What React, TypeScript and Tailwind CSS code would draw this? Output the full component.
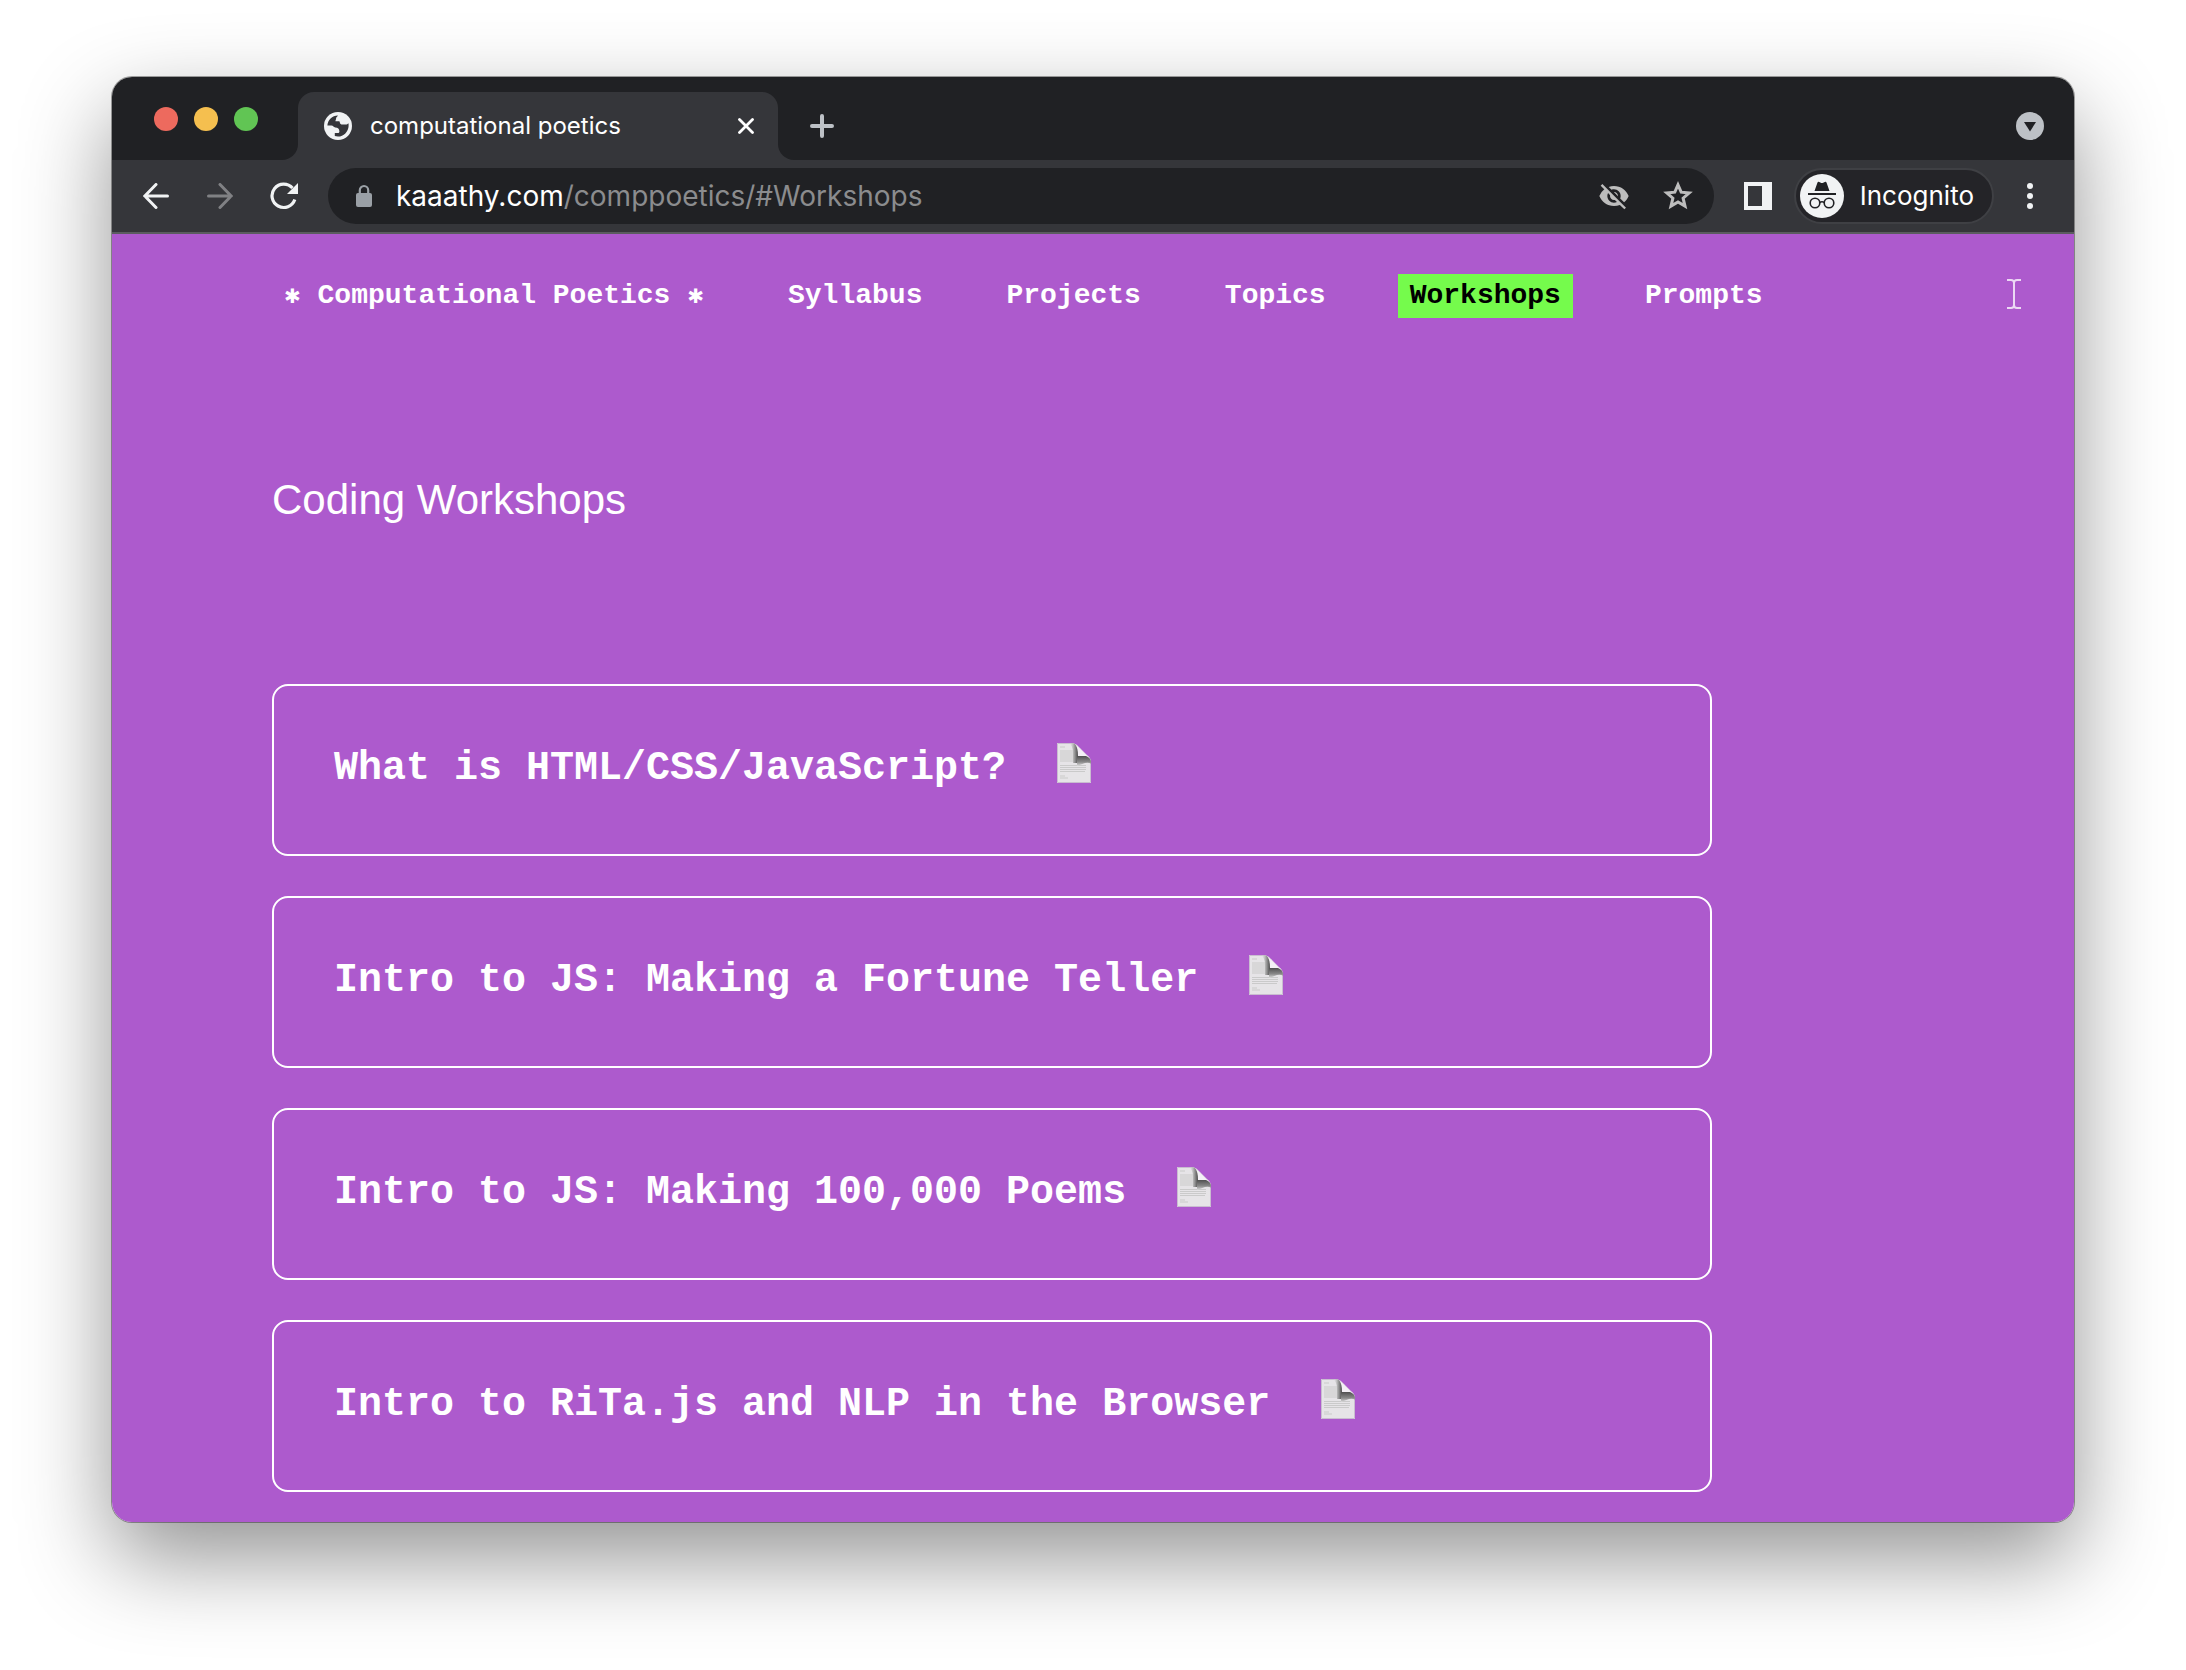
import type { ReactNode } from "react";
import { MdVisibilityOff } from "react-icons/md";

const navItems = ["Syllabus", "Projects", "Topics", "Workshops", "Prompts"];

const workshops = [
  "What is HTML/CSS/JavaScript?",
  "Intro to JS: Making a Fortune Teller",
  "Intro to JS: Making 100,000 Poems",
  "Intro to RiTa.js and NLP in the Browser",
];

function IconButton({ label, className, children }: { label: string; className: string; children: ReactNode }) {
  return (
    <button type="button" aria-label={label} className={`flex shrink-0 items-center justify-center ${className}`}>
      {children}
    </button>
  );
}

function GlobeIcon() {
  return (
    <svg viewBox="0 0 28 28" className="size-7 shrink-0" aria-hidden="true">
      <circle cx="14" cy="14" r="14" fill="#f1f3f4" />
      <path
        d="M3.4 13.6C3.6 8 8.2 3.5 14 3.4c-.6 1.400-1.900 1.400-1.900 2.900 0 1.600-.6 1.400-.6 2.900h3.300c.6 0 1 .5 1 1.100 0 1.500 1.200 2.300 2.800 2.300h3.300c.8 0 1.800-.5 2.500-1.400.2.900.3 1.800.2 2.800-.2 5.700-4.900 10.600-10.600 10.600-1.200 0-2.200-.2-3.200-.5v-3h3.200c1 0 1.400-.6 1.400-1.500 0-2.800-1.400-4.200-4.200-4.200-1.500 0-1.900-1.800-3.800-1.800z"
        fill="#35363a"
      />
    </svg>
  );
}

function IncognitoIcon() {
  return (
    <svg viewBox="0 0 44 44" className="size-11 shrink-0" aria-hidden="true">
      <circle cx="22" cy="22" r="22" fill="#f1f3f4" />
      <path d="M14.500 17 17.500 8.600c.3-.7 1-.9 1.700-.6l1.600.7c.8.300 1.600.3 2.400 0l1.600-.7c.7-.3 1.400-.1 1.700.6L29.500 17z" fill="#202124" />
      <path d="M8 20h28" stroke="#202124" strokeWidth="2" />
      <circle cx="15" cy="29" r="4.800" fill="none" stroke="#202124" strokeWidth="1.600" />
      <circle cx="29" cy="29" r="4.800" fill="none" stroke="#202124" strokeWidth="1.600" />
      <path d="M19.500 28.600q2.500-1.600 5 0" fill="none" stroke="#202124" strokeWidth="1.600" />
    </svg>
  );
}

function PageIcon() {
  return (
    <svg viewBox="0 0 34 40" className="h-10 w-[34px] shrink-0" role="img" aria-label="Document">
      <defs>
        <linearGradient id="curl" x1="0" y1="0" x2="0" y2="1">
          <stop offset="0" stopColor="#505050" />
          <stop offset="0.600" stopColor="#8a8a8a" />
          <stop offset="1" stopColor="#dedede" />
        </linearGradient>
        <linearGradient id="fold" x1="0" y1="0" x2="1" y2="0">
          <stop offset="0" stopColor="#dedede" stopOpacity="0" />
          <stop offset="0.500" stopColor="#b0b0b0" />
          <stop offset="1" stopColor="#4c4c4c" />
        </linearGradient>
      </defs>
      <path d="M0 0h16q4 1 7 5l7 7q4 3 4 7v21H0z" fill="#e6e4e7" />
      <path d="M.5 .5h15.500M.5 .5v39h33V19" fill="none" stroke="#c9bdd0" />
      <path
        d="M3 4h5M3 8h16M3 10h16M3 12h16M3 14h16M3 16h16M3 18h16M3 22.500h26M3 24.500h26M3 26.500h26M3 28.500h25M3 33h5M3 35h8"
        stroke="#cacaca"
        strokeWidth="1.200"
      />
      <path d="M12 0h4q5 2 5 9v11h-5V10q0-7-4-10z" fill="url(#fold)" />
      <path d="M20 13h9q5 2 5 6v2q-2-2-6-1l-8 3z" fill="url(#curl)" />
      <path d="M18 1q3 3 3 12h9z" fill="#f4f0f6" />
    </svg>
  );
}

function TabStrip() {
  return (
    <div className="flex h-[83px] bg-[#202124] pt-[15px] pr-[30px]">
      <div className="flex w-[170px] shrink-0 gap-4 pt-[15px] pl-[42px]">
        <button type="button" aria-label="Close window" className="size-6 rounded-full bg-[#ed6a5e]" />
        <button type="button" aria-label="Minimize window" className="size-6 rounded-full bg-[#f5bf4f]" />
        <button type="button" aria-label="Zoom window" className="size-6 rounded-full bg-[#61c554]" />
      </div>
      <div className="mt-13 w-4 shrink-0 bg-[#35363a]">
        <span className="block size-4 rounded-br-2xl bg-[#202124]" />
      </div>
      <div className="flex w-[480px] items-center rounded-t-2xl bg-[#35363a] pr-6 pl-[26px]">
        <GlobeIcon />
        <span className="ml-[18px] grow text-2xl text-white">computational poetics</span>
        <IconButton label="Close tab" className="size-4">
          <svg viewBox="0 0 16 16" className="size-4" aria-hidden="true">
            <path d="m1.500 1.500 13 13m0-13-13 13" stroke="#fff" strokeWidth="2.800" strokeLinecap="round" />
          </svg>
        </IconButton>
      </div>
      <div className="mt-13 w-4 shrink-0 bg-[#35363a]">
        <span className="block size-4 rounded-bl-2xl bg-[#202124]" />
      </div>
      <IconButton label="New tab" className="ml-4 w-6">
        <svg viewBox="0 0 24 24" className="size-6" aria-hidden="true">
          <path d="M12 2v20M2 12h20" stroke="#bdc1c6" strokeWidth="4" strokeLinecap="round" />
        </svg>
      </IconButton>
      <IconButton label="Search tabs" className="ml-auto w-7">
        <svg viewBox="0 0 28 28" className="size-7" aria-hidden="true">
          <circle cx="14" cy="14" r="14" fill="#bdc1c6" />
          <path d="M8 10h12l-6 9.500z" fill="#202124" />
        </svg>
      </IconButton>
    </div>
  );
}

function Toolbar() {
  return (
    <div className="flex h-[74px] items-center border-b-2 border-[#5b5c60] bg-[#35363a] pr-[30px] pl-6">
      <IconButton label="Back" className="size-10 text-[#f1f3f4]">
        <svg viewBox="0 0 26 26" className="size-[26px]" fill="none" stroke="currentColor" strokeWidth="3" strokeLinecap="round" aria-hidden="true">
          <path d="M24.500 13H2M13 1.500 1.800 13 13 24.500" />
        </svg>
      </IconButton>
      <IconButton label="Forward" className="ml-6 size-10 text-[#808184]">
        <svg viewBox="0 0 26 26" className="size-[26px]" fill="none" stroke="currentColor" strokeWidth="3" strokeLinecap="round" aria-hidden="true">
          <path d="M1.500 13H24M13 1.500 24.200 13 13 24.500" />
        </svg>
      </IconButton>
      <IconButton label="Reload" className="ml-6 size-10 text-[#f1f3f4]">
        <svg viewBox="0 0 28 28" className="size-7" aria-hidden="true">
          <path d="M24.800 17.500A11.700 11.700 0 1 1 22.500 6" fill="none" stroke="currentColor" strokeWidth="3.200" />
          <path d="M28 1v11H17z" fill="currentColor" />
        </svg>
      </IconButton>
      <div className="ml-6 flex h-14 grow items-center rounded-full bg-[#202124] pr-5 pl-6">
        <svg viewBox="0 0 24 24" className="size-6 shrink-0" aria-hidden="true">
          <rect x="4" y="9" width="16" height="14" rx="2" fill="#9aa0a6" />
          <path d="M7.800 10V6.200a4.200 4.200 0 0 1 8.400 0V10" fill="none" stroke="#9aa0a6" strokeWidth="2.200" />
        </svg>
        <a href="#Workshops" className="ml-5 grow text-[28px] leading-8 text-[#8b8c8e]">
          <span className="text-white">kaaathy.com</span>/comppoetics/#Workshops
        </a>
        <IconButton label="Third-party cookies blocked" className="size-8 text-[#bdbdbd]">
          <MdVisibilityOff className="size-8" />
        </IconButton>
        <IconButton label="Bookmark this tab" className="ml-8 size-8 text-[#bdbdbd]">
          <svg viewBox="0 0 32 32" className="size-8" fill="none" stroke="currentColor" strokeWidth="3" aria-hidden="true">
            <path d="m16 4.800 3.200 7.400 8 .7-6.100 5.300 1.900 7.900-7-4.200-7 4.200 1.900-7.900-6.100-5.300 8-.7z" />
          </svg>
        </IconButton>
      </div>
      <IconButton label="Side panel" className="ml-[30px] size-7">
        <svg viewBox="0 0 28 28" className="size-7" aria-hidden="true">
          <path d="M0 0h28v28H0zM4 4v20h14V4z" fill="#f1f3f4" fillRule="evenodd" />
        </svg>
      </IconButton>
      <button
        type="button"
        className="ml-[22px] flex h-14 items-center gap-4 rounded-full border-2 border-[#3f4044] bg-[#242428] pr-[18px] pl-1 text-[26px] leading-8 text-white"
      >
        <IncognitoIcon />
        Incognito
      </button>
      <IconButton label="Menu" className="ml-[22px] w-7">
        <svg viewBox="0 0 28 28" className="size-7" aria-hidden="true">
          <circle cx="14" cy="4" r="3" fill="#f1f3f4" />
          <circle cx="14" cy="14" r="3" fill="#f1f3f4" />
          <circle cx="14" cy="24" r="3" fill="#f1f3f4" />
        </svg>
      </IconButton>
    </div>
  );
}

export default function App() {
  return (
    <div className="min-h-screen bg-white px-28 pt-[77px] pb-37">
      <div className="overflow-hidden rounded-[20px] font-['Inter',sans-serif] shadow-[0_0_0_1px_rgba(0,0,0,0.35),0_36px_90px_rgba(0,0,0,0.43)]">
        <TabStrip />
        <Toolbar />
        <div className="bg-[#ad5acd] pt-10 pb-[30px] pl-40 text-white">
          <div className="flex items-start justify-between pr-13">
            <nav className="flex gap-15 font-['Liberation_Mono',monospace] text-[28px] leading-8 font-bold whitespace-nowrap">
              <a href="#" className="px-3 py-1.5">
                <span className="font-['DejaVu_Sans',sans-serif] text-xl leading-8">✱</span> Computational Poetics{" "}
                <span className="font-['DejaVu_Sans',sans-serif] text-xl leading-8">✱</span>
              </a>
              {navItems.map((item) => (
                <a
                  key={item}
                  href={`#${item}`}
                  className={item === "Workshops" ? "bg-[#75fb4c] px-3 py-1.5 text-black" : "px-3 py-1.5"}
                >
                  {item}
                </a>
              ))}
            </nav>
            <svg viewBox="0 0 16 30" className="mt-[5px] h-[30px] w-4" aria-hidden="true">
              <path d="M1 1h4q3 0 3 3 0-3 3-3h4M8 4v22M1 29h4q3 0 3-3 0 3 3 3h4" fill="none" stroke="#ecd8f4" strokeWidth="2" />
            </svg>
          </div>
          <h1 className="mt-[158px] font-['Liberation_Sans',sans-serif] text-[42px] leading-12">Coding Workshops</h1>
          <ul className="mt-40 flex max-w-[1440px] flex-col gap-10">
            {workshops.map((title) => (
              <li key={title} className="rounded-2xl border-2 border-white px-15 pt-[57px] pb-[61px]">
                <a
                  href="#Workshops"
                  className="flex items-start gap-[51px] font-['Liberation_Mono',monospace] text-[40px] leading-12 font-bold"
                >
                  <span className="pt-0.5">{title}</span>
                  <PageIcon />
                </a>
              </li>
            ))}
          </ul>
        </div>
      </div>
    </div>
  );
}
